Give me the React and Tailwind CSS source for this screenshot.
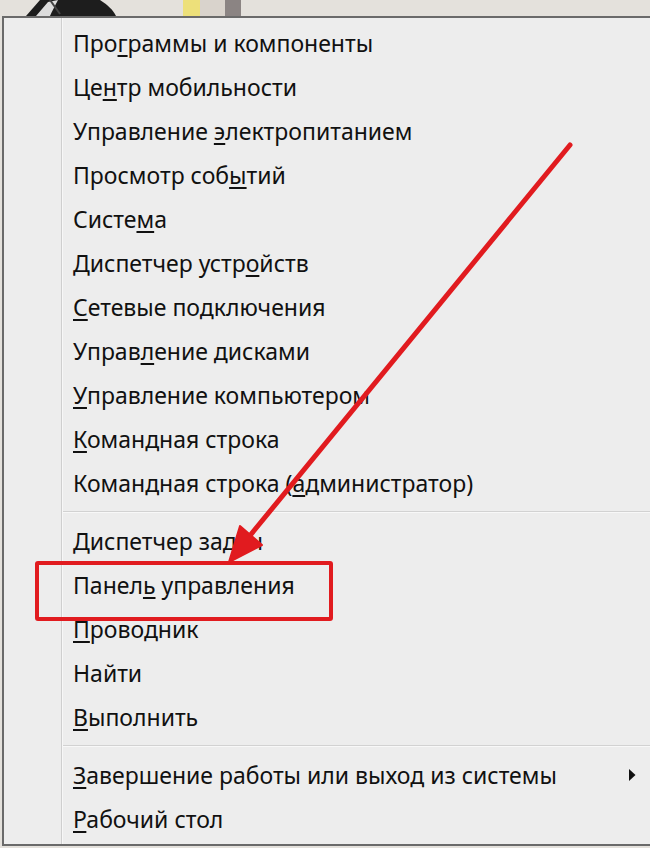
import React from "react";

// Win+X menu items; `u` is the index of the underlined (accelerator) letter
const GROUPS = [
  [
    { t: "Программы и компоненты", u: 3 },
    { t: "Центр мобильности", u: 2 },
    { t: "Управление электропитанием", u: 11 },
    { t: "Просмотр событий", u: 12 },
    { t: "Система", u: 5 },
    { t: "Диспетчер устройств", u: 14 },
    { t: "Сетевые подключения", u: 0 },
    { t: "Управление дисками", u: 5 },
    { t: "Управление компьютером", u: 0 },
    { t: "Командная строка", u: 0 },
    { t: "Командная строка (администратор)", u: 18 },
  ],
  [
    { t: "Диспетчер задач", u: 0 },
    { t: "Панель управления", u: 5 },
    { t: "Проводник", u: 0 },
    { t: "Найти", u: -1 },
    { t: "Выполнить", u: 0 },
  ],
  [
    { t: "Завершение работы или выход из системы", u: 0, sub: true },
    { t: "Рабочий стол", u: 0 },
  ],
];

const Label = ({ t, u }) => {
  if (u < 0) return <span>{t}</span>;
  return (
    <span>
      {t.slice(0, u)}
      <span className="underline underline-offset-[3px] decoration-[1.5px]">{t[u]}</span>
      {t.slice(u + 1)}
    </span>
  );
};

const MenuRow = ({ item }) => (
  <div className="h-[44px] flex items-center pl-[10px] pr-[14px]">
    <div className="flex-1 whitespace-nowrap">
      <Label t={item.t} u={item.u} />
    </div>
    {item.sub && (
      <svg className="w-[8px] h-[12px]" viewBox="0 0 8 12">
        <path d="M1 0 L7.5 6 L1 12 Z" fill="#111" />
      </svg>
    )}
  </div>
);

export default function App() {
  return (
    <div
      className="relative w-[650px] h-[848px] overflow-hidden bg-[#e4e1dc] text-[#111]"
      style={{ fontFamily: '"Noto Sans", "Open Sans", sans-serif' }}
    >
      {/* strip of desktop photo above the menu */}
      <div className="h-[16px] relative">
        <svg className="absolute inset-0" width="650" height="16" viewBox="0 0 650 16">
          <path d="M26 16 L40 0 L100 0 C108 5 113 10 116 16 Z" fill="#1d1d1d" />
          <path d="M36 16 L48 2 L58 0 C55 6 52 11 50 16 Z" fill="#dcdcdc" />
          <path d="M50 0 L60 14" stroke="#444" strokeWidth="2" />
          <rect x="183" y="0" width="17" height="16" fill="#ede07a" />
          <rect x="200" y="0" width="25" height="16" fill="#d9d3cc" />
          <rect x="225" y="0" width="16" height="16" fill="#8b8483" />
        </svg>
      </div>

      {/* the menu panel */}
      <div className="ml-[2px] h-[830px] border-t-[2px] border-l-[2px] border-b-[2px] border-[#6a6a6a] bg-[#ededed] flex text-[23px]">
        <div className="w-[58px] shrink-0 border-r border-[#cfcfcf]" />
        <div className="flex-1 pt-[3px] border-l border-[#f7f7f7]">
          {GROUPS.map((g, gi) => (
            <div key={gi}>
              {gi > 0 && (
                <div className="h-[14px] flex items-center">
                  <div className="w-full h-[2px] bg-[#d2d2d2] border-b border-[#f8f8f8]" />
                </div>
              )}
              {g.map((item) => (
                <MenuRow key={item.t} item={item} />
              ))}
            </div>
          ))}
        </div>
      </div>

      {/* red highlight box */}
      <div className="absolute left-[35px] top-[561px] w-[298px] h-[60px] border-[4px] border-[#e11b1f] rounded-[3px]" />

      {/* red arrow */}
      <svg className="absolute inset-0 pointer-events-none" width="650" height="848" viewBox="0 0 650 848">
        <line x1="570" y1="145" x2="248" y2="538" stroke="#e11b1f" strokeWidth="5" strokeLinecap="round" />
        <path d="M229 562 L262 545 L240 526 Z" fill="#e11b1f" stroke="#e11b1f" strokeWidth="2" strokeLinejoin="round" />
      </svg>
    </div>
  );
}
